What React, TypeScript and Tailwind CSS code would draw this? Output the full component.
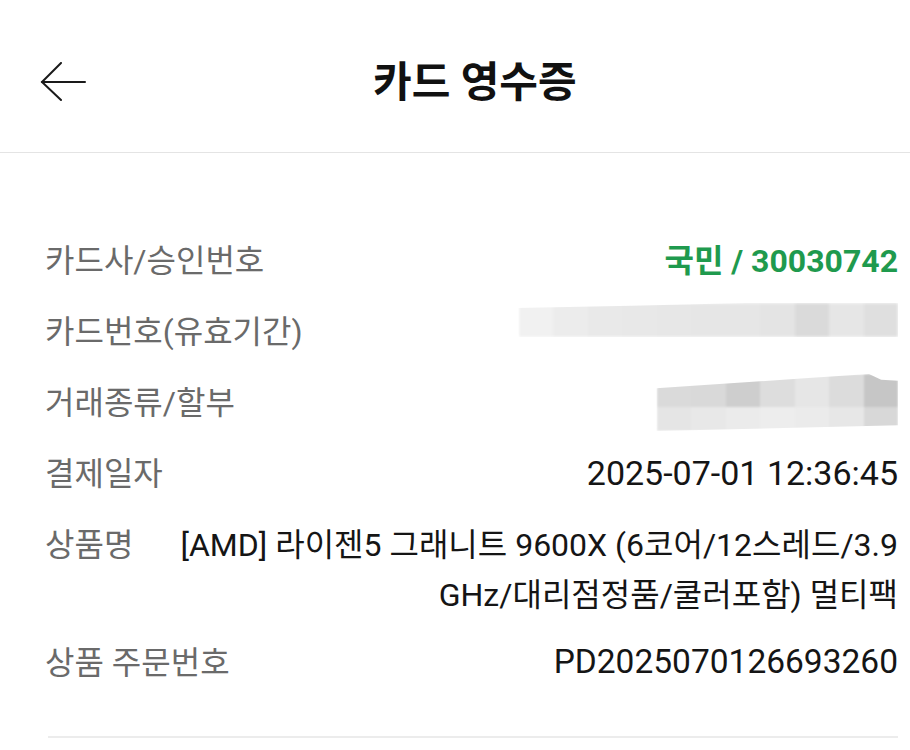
import type React from "react"

const font = { fontFamily: "Roboto, 'Noto Sans CJK KR', sans-serif" }

const cardBlocks = ["#f1f1f1", "#ececec", "#e9e9e9", "#e8e8e8", "#e7e7e7", "#e6e6e6", "#e6e6e6", "#e4e4e4", "#dadada", "#e6e6e6", "#dfdfdf"]
const typeTop = ["#dadada", "#d9d9d9", "#cecece", "#dddddd", "#e6e6e6", "#dcdcdc", "#c6c6c6"]
const typeBottom = ["#e5e5e5", "#e8e8e8", "#ebebeb", "#ededed", "#ebebeb", "#e7e7e7", "#d8d8d8"]

function Row({ label, children, className = "" }: { label: string; children: React.ReactNode; className?: string }) {
  return (
    <div className={`flex items-center justify-between h-[71px] ${className}`}>
      <span className="text-[32px] text-[#6a6a6a] whitespace-nowrap">{label}</span>
      {children}
    </div>
  )
}

export default function App() {
  return (
    <div className="w-[910px] h-[750px] bg-white overflow-hidden" style={font}>
      {/* header */}
      <header className="h-[153px] border-b border-[#e4e4e4] flex items-center pt-[12px] pl-[40px]">
        <svg width="46" height="40" viewBox="0 0 46 40" fill="none" stroke="#1a1a1a" strokeWidth="2" strokeLinecap="round">
          <path d="M2 20 H45" />
          <path d="M21 1 L2 20 L21 38" strokeLinejoin="miter" />
        </svg>
        <h1 className="ml-[287px] text-[42px] font-bold text-[#111]">카드 영수증</h1>
      </header>

      <div className="px-[45px] pr-[12px] pt-[72px]">
        <Row label="카드사/승인번호">
          <span className="text-[32px] font-bold text-[#1f9a4e]">국민 / 30030742</span>
        </Row>

        <Row label="카드번호(유효기간)">
          <div className="flex mb-[23px] blur-[1.5px] [clip-path:polygon(0_15%,30%_8%,60%_0,100%_0,100%_100%,0_100%)]">
            {cardBlocks.map((c, i) => (
              <div key={i} className="w-[34.5px] h-[34px]" style={{ background: c }} />
            ))}
          </div>
        </Row>

        <Row label="거래종류/할부">
          <div className="flex flex-col blur-[1.2px] [clip-path:polygon(0_25%,60%_8%,88%_0,93%_10%,100%_12%,100%_90%,0_100%)]">
            <div className="flex">
              {typeTop.map((c, i) => (
                <div key={i} className="w-[34.5px] h-[33px]" style={{ background: c }} />
              ))}
            </div>
            <div className="flex">
              {typeBottom.map((c, i) => (
                <div key={i} className="w-[34.5px] h-[24px]" style={{ background: c }} />
              ))}
            </div>
          </div>
        </Row>

        <Row label="결제일자">
          <span className="text-[34px] text-[#151515]">2025-07-01 12:36:45</span>
        </Row>

        <div className="flex items-start justify-between pt-[11px] pb-[7px]">
          <span className="text-[32px] text-[#6a6a6a] leading-[50px] whitespace-nowrap">상품명</span>
          <div className="text-[32px] text-[#151515] leading-[50px] text-right whitespace-nowrap">
            <div>[AMD] 라이젠5 그래니트 9600X (6코어/12스레드/3.9</div>
            <div>GHz/대리점정품/쿨러포함) 멀티팩</div>
          </div>
        </div>

        <Row label="상품 주문번호">
          <span className="text-[33.5px] text-[#151515]">PD2025070126693260</span>
        </Row>

        <div className="mt-[38px] ml-[3px] h-[2px] bg-[#ececec]" />
      </div>
    </div>
  )
}
